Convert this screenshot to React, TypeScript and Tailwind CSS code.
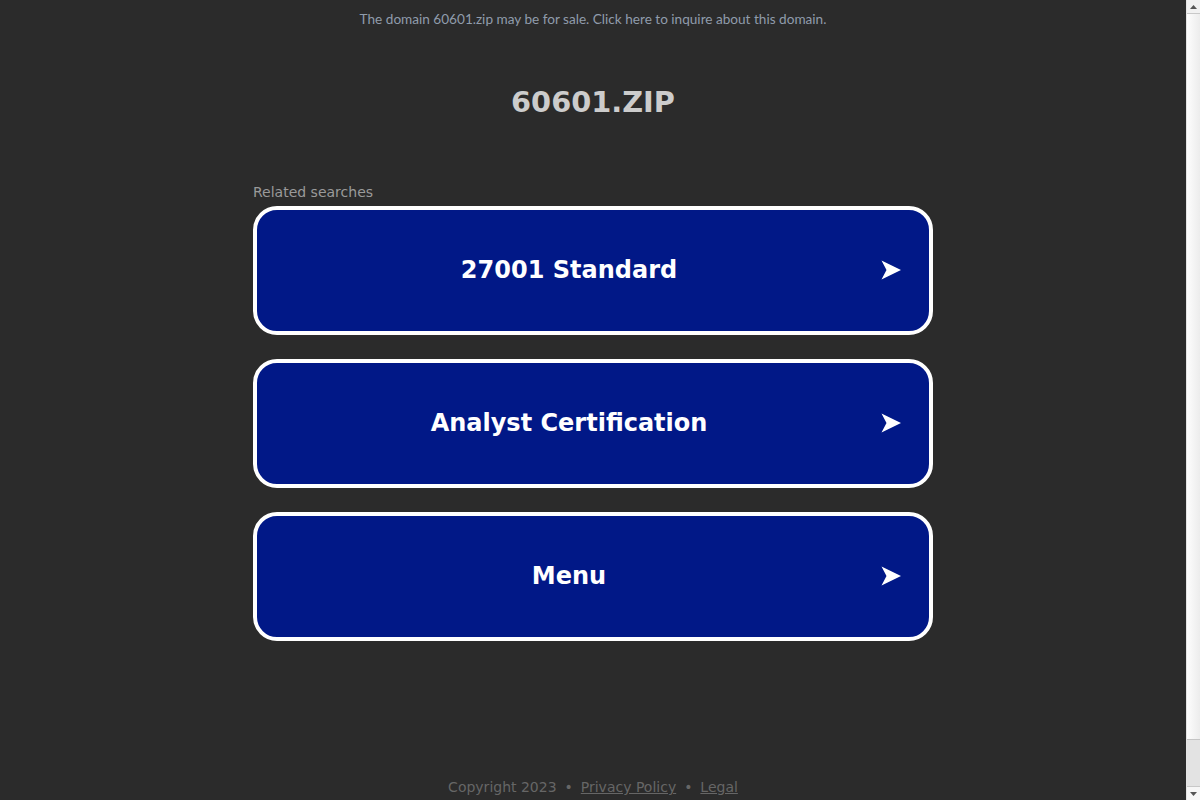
import React from "react";

const searches = ["27001 Standard", "Analyst Certification", "Menu"];

const Arrow = () => (
  <svg width="20" height="20" viewBox="0 0 20 20" className="shrink-0">
    <path d="M0.5 0.5 L20 10 L0.5 19.5 L5.5 10 Z" fill="white" />
  </svg>
);

const ScrollBar = () => (
  <div className="sticky top-0 h-[800px] w-[14px] shrink-0 flex flex-col bg-[#f1f1f1] border-l border-[#e4e4e4]">
    <div className="h-[14px] flex items-center justify-center border-b border-[#c8c8c8]">
      <svg width="7" height="4" viewBox="0 0 7 4">
        <path d="M3.5 0 L7 4 L0 4 Z" fill="#555" />
      </svg>
    </div>
    <div className="h-[726px] bg-gradient-to-r from-[#fdfdfd] to-[#ececec] border-b border-[#c4c4c4]" />
    <div className="flex-1 bg-[#e3e3e3]" />
    <div className="h-[14px] flex items-center justify-center border-t border-[#c8c8c8] bg-[#f6f6f6]">
      <svg width="7" height="4" viewBox="0 0 7 4">
        <path d="M0 0 L7 0 L3.5 4 Z" fill="#555" />
      </svg>
    </div>
  </div>
);

const App: React.FC = () => {
  return (
    <div className="flex items-start bg-[#2b2b2b]">
      <div className="flex-1 min-h-[852px] font-['DejaVu_Sans',sans-serif] pb-[55px]">
        {/* Sale banner */}
        <div className="pt-[9px] text-center text-[13.6px] leading-[20px] text-[#909cab] font-['Lato','Noto_Sans',sans-serif]">
          The domain 60601.zip may be for sale. Click here to inquire about this domain.
        </div>

        {/* Domain title */}
        <h1 className="mt-[55px] text-center text-[28.8px] leading-[36px] font-bold text-[#cccccc]">
          60601.ZIP
        </h1>

        {/* Related searches */}
        <div className="w-[680px] mx-auto mt-[62px]">
          <p className="text-[14px] leading-[20px] text-[#9a9a9a] mb-[4px]">Related searches</p>
          <div className="flex flex-col gap-[24px]">
            {searches.map((s) => (
              <a
                key={s}
                href="#"
                className="flex items-center h-[129px] pb-[2px] bg-[#011887] border-4 border-white rounded-[24px] text-white"
              >
                <span className="flex-1 text-center text-[24px] font-bold">{s}</span>
                <span className="mr-[28px]">
                  <Arrow />
                </span>
              </a>
            ))}
          </div>
        </div>

        {/* Footer */}
        <div className="mt-[136px] text-center text-[14px] leading-[20px] text-[#666666]">
          Copyright 2023 <span className="mx-[3.5px]">•</span>{" "}
          <a href="#" className="underline">Privacy Policy</a>{" "}
          <span className="mx-[3.5px]">•</span>{" "}
          <a href="#" className="underline">Legal</a>
        </div>
      </div>
      <ScrollBar />
    </div>
  );
};

export default App;
